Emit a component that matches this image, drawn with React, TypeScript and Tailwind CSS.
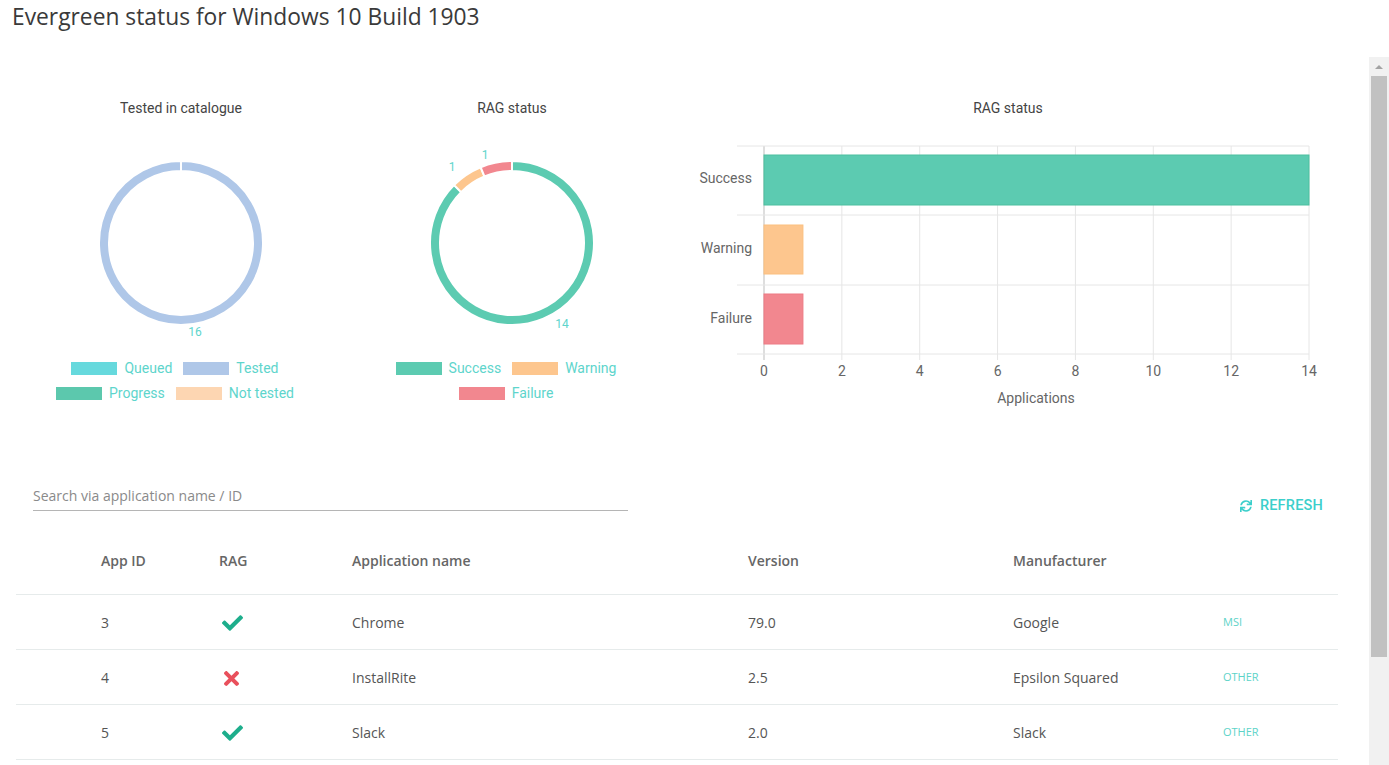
import { FaSync } from "react-icons/fa";

const TEAL_TEXT = "#5ed5cc";

function arc(cx: number, cy: number, ro: number, ri: number, a0: number, a1: number) {
  const p = (r: number, a: number) => [
    cx + r * Math.sin((a * Math.PI) / 180),
    cy - r * Math.cos((a * Math.PI) / 180),
  ];
  const large = a1 - a0 > 180 ? 1 : 0;
  const [x0, y0] = p(ro, a0);
  const [x1, y1] = p(ro, a1);
  const [x2, y2] = p(ri, a1);
  const [x3, y3] = p(ri, a0);
  return `M${x0} ${y0} A${ro} ${ro} 0 ${large} 1 ${x1} ${y1} L${x2} ${y2} A${ri} ${ri} 0 ${large} 0 ${x3} ${y3} Z`;
}

type Seg = { from: number; to: number; color: string };
type Label = { x: number; y: number; text: string };

function Donut({ title, segs, labels, legend }: { title: string; segs: Seg[]; labels: Label[]; legend: { label: string; color: string }[][] }) {
  return (
    <div className="flex flex-col items-center">
      <div className="h-[20px] text-[14px] leading-[20px] text-[#444] font-['Roboto']">{title}</div>
      <svg width="330" height="200" className="mt-[35px] overflow-visible">
        {segs.map((s, i) => (
          <path key={i} d={arc(165, 90, 82, 72, s.from, s.to)} fill={s.color} stroke="#fff" strokeWidth="2" />
        ))}
        {labels.map((l, i) => (
          <text key={i} x={l.x} y={l.y} textAnchor="middle" dominantBaseline="central" fontSize="12" fontFamily="Roboto" fill={TEAL_TEXT}>
            {l.text}
          </text>
        ))}
      </svg>
      <div className="mr-[12px] mt-[3px] flex flex-col items-center font-['Roboto'] text-[14px]" style={{ color: TEAL_TEXT }}>
        {legend.map((row, i) => (
          <div key={i} className="flex h-[25px] items-center gap-[11px]">
            {row.map((it) => (
              <div key={it.label} className="flex items-center gap-[7px]">
                <span className="h-[13px] w-[46px]" style={{ background: it.color }} />
                <span>{it.label}</span>
              </div>
            ))}
          </div>
        ))}
      </div>
    </div>
  );
}

function BarChart() {
  const x0 = 86;
  const step = (631 - 86) / 14;
  const gy = [16, 85, 155, 224];
  const ticks = [0, 2, 4, 6, 8, 10, 12, 14];
  const bars = [
    { label: "Success", v: 14, y0: 25, y1: 75, fill: "#5ccbb1", stroke: "#4dbf9f", ly: 48 },
    { label: "Warning", v: 1, y0: 95, y1: 144, fill: "#fdc68e", stroke: "#fbbf7f", ly: 118 },
    { label: "Failure", v: 1, y0: 164, y1: 214, fill: "#f2878f", stroke: "#ee7a84", ly: 188 },
  ];
  return (
    <div className="flex flex-col items-center">
      <div className="h-[20px] text-[14px] leading-[20px] text-[#444] font-['Roboto']">RAG status</div>
      <svg width="660" height="280" className="mt-[12px] overflow-visible font-['Roboto']">
        {ticks.map((t) => (
          <line key={t} x1={x0 + t * step} x2={x0 + t * step} y1={gy[0]} y2={gy[3] + 6} stroke={t === 0 ? "#bdbdbd" : "#e6e6e6"} strokeWidth="1" />
        ))}
        {gy.map((y) => (
          <line key={y} x1={59} x2={631} y1={y} y2={y} stroke="#e6e6e6" strokeWidth="1" />
        ))}
        {bars.map((b) => (
          <g key={b.label}>
            <rect x={x0} y={b.y0} width={b.v * step} height={b.y1 - b.y0} fill={b.fill} stroke={b.stroke} strokeWidth="1" />
            <text x={74} y={b.ly} textAnchor="end" dominantBaseline="central" fontSize="14" fill="#666">
              {b.label}
            </text>
          </g>
        ))}
        {ticks.map((t) => (
          <text key={t} x={x0 + t * step} y={241} textAnchor="middle" dominantBaseline="central" fontSize="14" fill="#666">
            {t}
          </text>
        ))}
        <text x={358} y={268} textAnchor="middle" dominantBaseline="central" fontSize="14" fill="#666">
          Applications
        </text>
      </svg>
    </div>
  );
}

function Check() {
  return (
    <svg viewBox="0 64 512 384" className="h-[16px] w-[21px]" fill="#1eae8c">
      <path d="M173.898 439.404l-166.4-166.4c-9.997-9.997-9.997-26.206 0-36.204l36.203-36.204c9.997-9.998 26.207-9.998 36.204 0L192 312.69 432.095 72.596c9.997-9.997 26.207-9.997 36.204 0l36.203 36.204c9.997 9.997 9.997 26.206 0 36.204l-294.4 294.401c-9.998 9.997-26.207 9.997-36.204-.001z" />
    </svg>
  );
}

function Cross() {
  return (
    <svg viewBox="0 80 352 352" className="h-[15px] w-[15px]" fill="#e9505c">
      <path d="M242.72 256l100.07-100.070c12.28-12.28 12.28-32.19 0-44.48l-22.24-22.24c-12.28-12.28-32.19-12.28-44.48 0L176 189.28 75.930 89.21c-12.28-12.28-32.19-12.28-44.48 0L9.21 111.45c-12.28 12.28-12.28 32.19 0 44.48L109.28 256 9.21 356.07c-12.28 12.28-12.28 32.19 0 44.48l22.24 22.24c12.28 12.28 32.2 12.28 44.48 0L176 322.72l100.07 100.07c12.28 12.28 32.2 12.28 44.48 0l22.24-22.24c12.28-12.28 12.28-32.19 0-44.48L242.72 256z" />
    </svg>
  );
}

const rows = [
  { id: "3", ok: true, name: "Chrome", version: "79.0", maker: "Google", type: "MSI" },
  { id: "4", ok: false, name: "InstallRite", version: "2.5", maker: "Epsilon Squared", type: "OTHER" },
  { id: "5", ok: true, name: "Slack", version: "2.0", maker: "Slack", type: "OTHER" },
];

const cols = "grid grid-cols-[118px_133px_396px_265px_210px_1fr] pl-[85px] items-center";

export default function App() {
  return (
    <div className="h-[765px] w-[1389px] overflow-hidden bg-white font-['Open_Sans'] text-[#555]">
      <div className="h-[57px] pl-[12px] text-[22.8px] leading-[34px] text-[#3a3a3a]">Evergreen status for Windows 10 Build 1903</div>
      <div className="flex h-[708px]">
        <div className="flex-1 pl-[16px] pr-[31px]">
          <div className="flex h-[429px] pt-[41px]">
            <div className="w-[330px]">
              <Donut
                title="Tested in catalogue"
                segs={[{ from: 0.01, to: 359.99, color: "#afc7e8" }]}
                labels={[{ x: 179, y: 179, text: "16" }]}
                legend={[
                  [
                    { label: "Queued", color: "#66d9dd" },
                    { label: "Tested", color: "#afc7e8" },
                  ],
                  [
                    { label: "Progress", color: "#5cc8ad" },
                    { label: "Not tested", color: "#fdd6b2" },
                  ],
                ]}
              />
            </div>
            <div className="w-[332px]">
              <Donut
                title="RAG status"
                segs={[
                  { from: 0, to: 315, color: "#5ccbb1" },
                  { from: 315, to: 337.5, color: "#fdc68e" },
                  { from: 337.5, to: 360, color: "#f2878f" },
                ]}
                labels={[
                  { x: 105, y: 14, text: "1" },
                  { x: 138, y: 2, text: "1" },
                  { x: 215, y: 171, text: "14" },
                ]}
                legend={[
                  [
                    { label: "Success", color: "#5ccbb1" },
                    { label: "Warning", color: "#fdc68e" },
                  ],
                  [{ label: "Failure", color: "#f2878f" }],
                ]}
              />
            </div>
            <div className="w-[660px]">
              <BarChart />
            </div>
          </div>

          <div className="flex items-end justify-between">
            <div className="ml-[17px] w-[595px] border-b border-[#b5b5b5] pb-[4px] text-[14px] leading-[20px] text-[#8a8a8a]">
              Search via application name / ID
            </div>
            <div className="mb-[-6px] mr-[15px] flex items-center gap-[8px] font-['Roboto'] text-[14.5px] font-medium tracking-[0.2px] text-[#3ccfcb]">
              <FaSync className="h-[12px] w-[12px]" />
              <span>REFRESH</span>
            </div>
          </div>

          <div className="mt-[17px]">
            <div className={`${cols} h-[67px] border-b border-[#e6ebeb] pb-[2px] text-[14px] font-semibold text-[#666]`}>
              <div>App ID</div>
              <div>RAG</div>
              <div>Application name</div>
              <div>Version</div>
              <div>Manufacturer</div>
              <div />
            </div>
            {rows.map((r) => (
              <div key={r.id} className={`${cols} h-[55px] border-b border-[#e6ebeb] text-[14px]`}>
                <div>{r.id}</div>
                <div className="pl-[3px] pt-[2px]">{r.ok ? <Check /> : <div className="pl-[2px]"><Cross /></div>}</div>
                <div>{r.name}</div>
                <div>{r.version}</div>
                <div>{r.maker}</div>
                <div className="text-[11px] text-[#5dd3c8]">{r.type}</div>
              </div>
            ))}
          </div>
        </div>

        <div className="flex w-[20px] flex-col bg-[#f1f1f1] pl-[2px] pr-[2px]">
          <div className="flex h-[19px] items-center justify-center">
            <div className="h-0 w-0 border-x-[4px] border-b-[4px] border-x-transparent border-b-[#a3a3a3]" />
          </div>
          <div className="h-[581px] bg-[#c1c1c1]" />
        </div>
      </div>
    </div>
  );
}
